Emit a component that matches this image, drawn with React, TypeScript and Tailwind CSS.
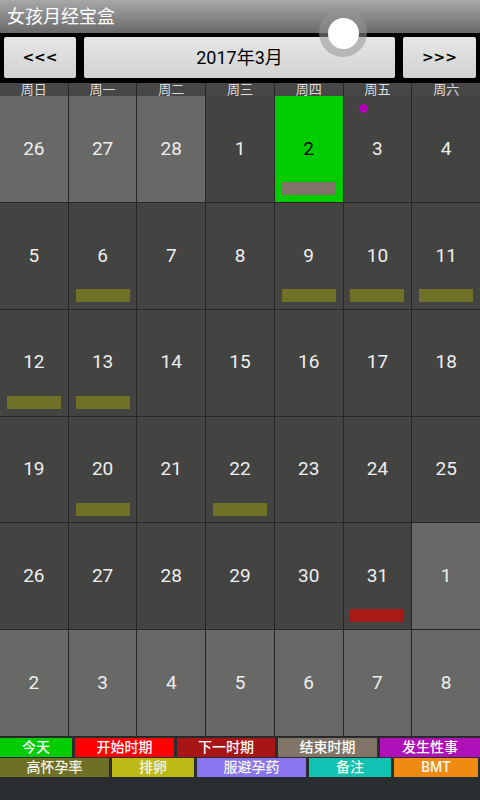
import { FC } from "react";

type Day = {
  n: number;
  other?: boolean;
  today?: boolean;
  bar?: string;
  dot?: boolean;
};

const weekdays = ["周日", "周一", "周二", "周三", "周四", "周五", "周六"];

const OLIVE = "bg-[#6f7226]";

const days: Day[] = [
  { n: 26, other: true },
  { n: 27, other: true },
  { n: 28, other: true },
  { n: 1 },
  { n: 2, today: true, bar: "bg-[#7f7467]" },
  { n: 3, dot: true },
  { n: 4 },
  { n: 5 },
  { n: 6, bar: OLIVE },
  { n: 7 },
  { n: 8 },
  { n: 9, bar: OLIVE },
  { n: 10, bar: OLIVE },
  { n: 11, bar: OLIVE },
  { n: 12, bar: OLIVE },
  { n: 13, bar: OLIVE },
  { n: 14 },
  { n: 15 },
  { n: 16 },
  { n: 17 },
  { n: 18 },
  { n: 19 },
  { n: 20, bar: OLIVE },
  { n: 21 },
  { n: 22, bar: OLIVE },
  { n: 23 },
  { n: 24 },
  { n: 25 },
  { n: 26 },
  { n: 27 },
  { n: 28 },
  { n: 29 },
  { n: 30 },
  { n: 31, bar: "bg-[#a81a17]" },
  { n: 1, other: true },
  { n: 2, other: true },
  { n: 3, other: true },
  { n: 4, other: true },
  { n: 5, other: true },
  { n: 6, other: true },
  { n: 7, other: true },
  { n: 8, other: true },
];

const legendTop = [
  { label: "今天", cls: "w-[72px] bg-[#00cc00]" },
  { label: "开始时期", cls: "w-[99px] bg-[#ff0000]" },
  { label: "下一时期", cls: "w-[98px] bg-[#a81515]" },
  { label: "结束时期", cls: "w-[99px] bg-[#7f7466]" },
  { label: "发生性事", cls: "flex-1 bg-[#b010b8]" },
];

const legendBottom = [
  { label: "高怀孕率", cls: "w-[109px] bg-[#6e7026]" },
  { label: "排卵", cls: "w-[82px] bg-[#bdba18]" },
  { label: "服避孕药", cls: "w-[109px] bg-[#8a74ef]" },
  { label: "备注", cls: "w-[82px] bg-[#10c2b2]" },
  { label: "BMT", cls: "w-[84px] bg-[#ef8a12]" },
];

const DayCell: FC<{ d: Day }> = ({ d }) => {
  const bg = d.today ? "bg-[#00cc00]" : d.other ? "bg-[#686967]" : "bg-[#434442]";
  return (
    <div className={`relative flex flex-col items-center ${bg}`}>
      {d.dot && <div className="absolute left-[15px] top-[8px] h-[9px] w-[9px] rounded-full bg-[#b000b8]" />}
      <div className={`flex h-[86px] items-center pt-[20px] text-[19px] ${d.today ? "text-black" : "text-[#eeeeee]"}`}>
        {d.n}
      </div>
      {d.bar && <div className={`h-[13px] w-[54px] ${d.bar}`} />}
    </div>
  );
};

const App: FC = () => {
  return (
    <div className="relative h-[800px] w-[480px] overflow-hidden bg-[#2a2d30] font-['Roboto','Noto_Sans_CJK_SC',sans-serif]">
      {/* action bar */}
      <div className="flex h-[33px] items-center bg-gradient-to-b from-[#a8a8a8] to-[#6a6a6a] pl-[7px] text-[18px] text-white">
        女孩月经宝盒
      </div>

      {/* month switcher */}
      <div className="flex h-[50px] gap-[8px] bg-black px-[4px] pb-[5px] pt-[4px]">
        <button className="w-[72px] rounded-[2px] bg-gradient-to-b from-[#e6e6e6] to-[#d2d2d2] font-['DejaVu_Sans',sans-serif] text-[14px] font-bold text-black">
          &lt;&lt;&lt;
        </button>
        <button className="flex-1 rounded-[2px] bg-gradient-to-b from-[#e6e6e6] to-[#d2d2d2] text-[18px] text-black">
          2017年3月
        </button>
        <button className="w-[73px] rounded-[2px] bg-gradient-to-b from-[#e6e6e6] to-[#d2d2d2] font-['DejaVu_Sans',sans-serif] text-[14px] font-bold text-black">
          &gt;&gt;&gt;
        </button>
      </div>

      {/* weekday header */}
      <div className="grid h-[12px] grid-cols-7 gap-px bg-[#262626]">
        {weekdays.map((w) => (
          <div key={w} className="flex items-center justify-center bg-[#464746] text-[13px] leading-none text-[#dddddd]">
            {w}
          </div>
        ))}
      </div>

      {/* month grid */}
      <div className="grid h-[642px] grid-cols-7 grid-rows-6 gap-px bg-[#262626] py-px">
        {days.map((d, i) => (
          <DayCell key={i} d={d} />
        ))}
      </div>

      {/* legend */}
      <div className="flex flex-col gap-px pt-px">
        <div className="flex h-[19px] gap-[3px]">
          {legendTop.map((l) => (
            <div key={l.label} className={`flex items-center justify-center text-[14px] font-medium text-white ${l.cls}`}>
              {l.label}
            </div>
          ))}
        </div>
        <div className="flex h-[19px] gap-[3px]">
          {legendBottom.map((l) => (
            <div key={l.label} className={`flex items-center justify-center text-[14px] font-medium text-[#f4f4e8] ${l.cls}`}>
              {l.label}
            </div>
          ))}
        </div>
      </div>

      {/* touch indicator */}
      <div className="absolute left-[319px] top-[9px] flex h-[48px] w-[48px] items-center justify-center rounded-full bg-[rgba(150,150,150,0.55)]">
        <div className="h-[31px] w-[31px] rounded-full bg-white" />
      </div>
    </div>
  );
};

export default App;
